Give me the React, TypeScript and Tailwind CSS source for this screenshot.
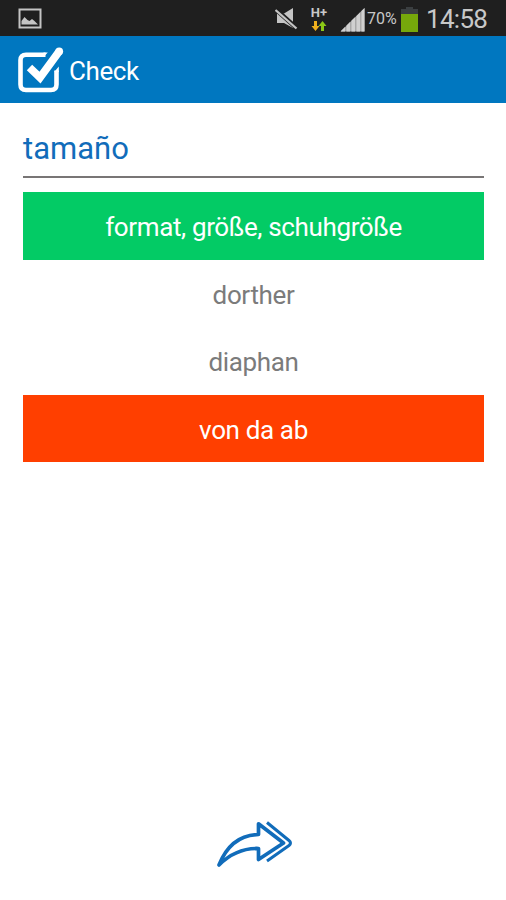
import React from "react";

function PictureIcon() {
  return (
    <svg className="h-[21px] w-[24px] shrink-0" viewBox="0 0 24 21" fill="none">
      <rect x="1.5" y="1.5" width="21" height="18" stroke="#c4c4c4" strokeWidth="2" />
      <path d="M3.500 16.500V13l3-4 3 3 2 1 2.500-2 2.500 2 3.500 3.500z" fill="#c4c4c4" />
    </svg>
  );
}

function MutedIcon() {
  return (
    <svg className="h-[22px] w-[24px] shrink-0" viewBox="0 0 24 22">
      <path d="M2 5.500h7l9-5.500v20L9 15H2z" fill="#c4c4c4" />
      <path d="M1 1.500L22 20.500" stroke="#1f1f1f" strokeWidth="4.500" />
      <path d="M0.500 2L21.500 20.500" stroke="#c4c4c4" strokeWidth="2.300" />
    </svg>
  );
}

function DataArrows() {
  return (
    <svg className="h-[11px] w-[16px]" viewBox="0 0 16 11">
      <path d="M3 0h3v5h2.500L4.500 10 0.500 5H3z" fill="#f0b01e" />
      <path d="M10 10h3V5h2.500L11.500 0 7.500 5H10z" fill="#8bc816" />
    </svg>
  );
}

function SignalIcon() {
  return (
    <svg className="h-[24px] w-[25px] shrink-0" viewBox="0 0 25 24">
      <path d="M0.500 23.500L24.500 0V23.500z" fill="#a8a8a8" />
      <path d="M1 23.500V23l4-4v4.500zM6.500 23.500V17.500l3.500-3.500v9.500zM11.500 23.500V12.500l3.500-3.300v14.300zM16.500 23.500V8l3.500-3.500v19zM21.500 23.500V3L24.500 0v23.500z" fill="#d0d0d0" />
    </svg>
  );
}

function BatteryIcon() {
  return (
    <svg className="h-[25px] w-[18px] shrink-0" viewBox="0 0 18 25">
      <path d="M5 0h7v2h5v6H0V2h5z" fill="#3b3f41" />
      <rect y="7" width="17" height="18" fill="#76a80b" />
    </svg>
  );
}

function CheckLogo() {
  return (
    <svg className="h-[48px] w-[48px] shrink-0" viewBox="0 0 48 48" fill="none" stroke="#fff">
      <path d="M29.500 8.800H10Q4.500 8.800 4.500 14v24.500Q4.500 44 10 44H35Q40.500 44 40.500 38.500V24.500" strokeWidth="4.600" />
      <path d="M27.500 11l4.300-4.500h-4.300zM38.200 26l4.600-5.500v5.500z" fill="#fff" stroke="none" />
      <path d="M13.500 21.500L24 31.500L43.300 5.300" strokeWidth="7.800" />
      <circle cx="43.200" cy="5.300" r="3.900" fill="#fff" stroke="none" />
    </svg>
  );
}

function NextArrow() {
  return (
    <svg className="h-[48px] w-[78px]" viewBox="0 0 78 48" fill="none" stroke="#116cba" strokeWidth="3.700" strokeLinejoin="round" strokeLinecap="round">
      <path d="M3 44C9 29 20 14 42.500 13.500V2.800L67.500 22 42.500 38.500V27.500C27 27 15 32 3 44z" />
      <path d="M51 1.500L73 19.500Q76 22 73 24.500L51 40" strokeLinecap="butt" strokeWidth="3" />
    </svg>
  );
}

const answers = [
  { text: "format, größe, schuhgröße", style: "bg-[#03cb65] text-white" },
  { text: "dorther", style: "text-[#7b7b7b]" },
  { text: "diaphan", style: "text-[#7b7b7b]" },
  { text: "von da ab", style: "bg-[#ff3f00] text-white" },
];

export default function App() {
  return (
    <div className="flex h-[900px] w-[506px] flex-col overflow-hidden bg-white font-[Roboto,sans-serif]">
      <div className="flex h-[36px] shrink-0 items-start bg-[#1f1f1f] pl-[18px] text-[#c8c8c8]">
        <div className="pt-[8px]"><PictureIcon /></div>
        <div className="ml-[233px] pt-[8px]"><MutedIcon /></div>
        <div className="ml-[9px] flex w-[22px] flex-col items-center pt-[6px]">
          <span className="text-[13px] leading-[14px] font-bold">H+</span>
          <div className="pt-px"><DataArrows /></div>
        </div>
        <div className="ml-[10px] pt-[8px]"><SignalIcon /></div>
        <span className="ml-[2px] w-[32px] pt-[9px] text-[16px] leading-[20px] whitespace-nowrap">70%</span>
        <div className="ml-[2px] pt-[7px]"><BatteryIcon /></div>
        <span className="ml-[7px] pt-[3px] text-[26px] leading-[32px] tracking-[-0.7px]">14:58</span>
      </div>
      <header className="flex h-[67px] shrink-0 items-center bg-[#0077c0] pl-[16px] text-white">
        <CheckLogo />
        <h1 className="ml-[5px] pt-[2px] text-[26px] leading-[32px] tracking-[-0.4px]">Check</h1>
      </header>
      <main className="flex flex-1 flex-col px-[23px]">
        <h2 className="mr-[-1px] h-[75px] border-b-[2px] border-[#787575] pt-[25px] text-[31px] leading-[41px] text-[#116cba]">tamaño</h2>
        <div className="mt-[14px] mr-[-1px] flex flex-col">
          {answers.map((a) => (
            <div key={a.text} className={`flex h-[67.5px] items-center justify-center pt-[3px] text-[26px] leading-[32px] tracking-[-0.36px] ${a.style}`}>
              <span>{a.text}</span>
            </div>
          ))}
        </div>
      </main>
      <footer className="flex h-[79px] shrink-0 justify-center pl-[3px]">
        <NextArrow />
      </footer>
    </div>
  );
}
